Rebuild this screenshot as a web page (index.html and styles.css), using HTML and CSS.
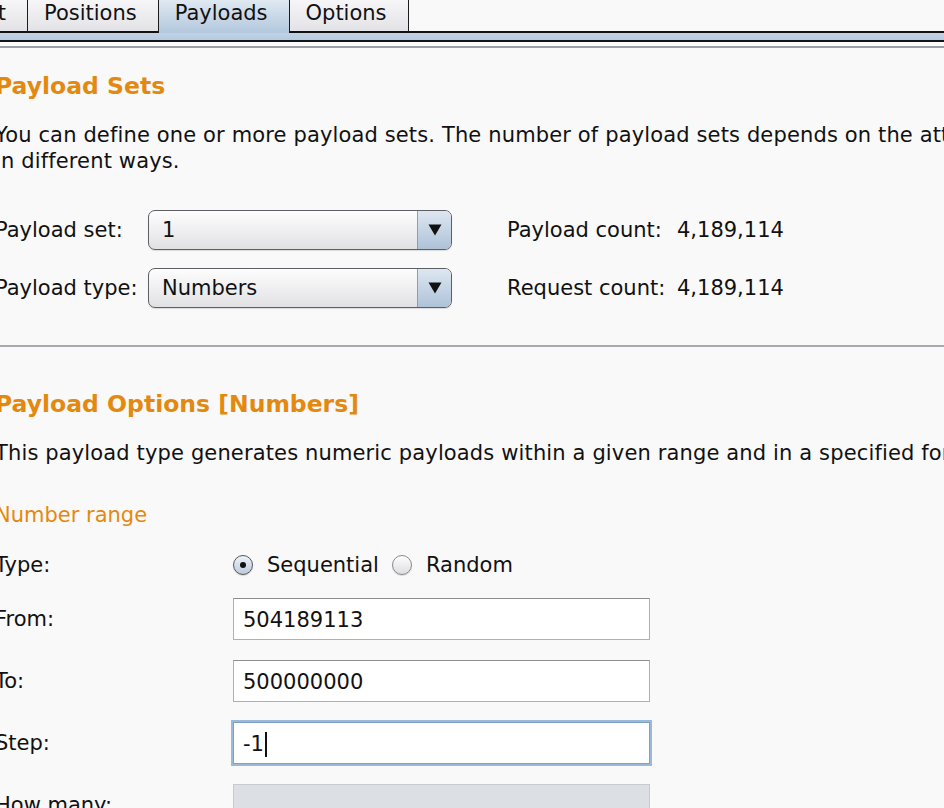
FILE: index.html
```html
<!DOCTYPE html>
<html>
<head>
<meta charset="utf-8">
<title>Intruder Payloads</title>
<link rel="stylesheet" href="styles.css">
</head>
<body>
<div class="tabbar">
  <div class="tabs">
    <div class="tab">Target</div>
    <div class="tab">Positions</div>
    <div class="tab sel">Payloads</div>
    <div class="tab">Options</div>
    <div class="tabfill"></div>
  </div>
  <div class="band"></div>
  <div class="gap"></div>
  <div class="rule"></div>
</div>
<main class="content">
  <h2 class="heading">Payload Sets</h2>
  <p class="desc">You can define one or more payload sets. The number of payload sets depends on the attack type defined in the Positions tab. Various payload types are available for each payload set, and each payload type can be customized<br>in different ways.</p>
  <div class="set-grid">
    <div class="lbl">Payload set:</div>
    <div class="combo"><span class="combo-val">1</span><span class="combo-btn"><svg width="14" height="12" viewBox="0 0 14 12"><polygon points="0.5,0.5 13.5,0.5 7,11.5" fill="#111"/></svg></span></div>
    <div class="count-lbl">Payload count:</div>
    <div class="count-val">4,189,114</div>
    <div class="lbl">Payload type:</div>
    <div class="combo"><span class="combo-val">Numbers</span><span class="combo-btn"><svg width="14" height="12" viewBox="0 0 14 12"><polygon points="0.5,0.5 13.5,0.5 7,11.5" fill="#111"/></svg></span></div>
    <div class="count-lbl">Request count:</div>
    <div class="count-val">4,189,114</div>
  </div>
  <div class="sep"></div>
  <h2 class="heading h2b">Payload Options [Numbers]</h2>
  <p class="desc">This payload type generates numeric payloads within a given range and in a specified format.</p>
  <div class="subhead">Number range</div>
  <div class="range-grid">
    <div class="lbl">Type:</div>
    <div class="radios">
      <span class="radio on"></span><span class="rtext">Sequential</span>
      <span class="radio"></span><span class="rtext">Random</span>
    </div>
    <div class="lbl">From:</div>
    <div class="field">504189113</div>
    <div class="lbl">To:</div>
    <div class="field">500000000</div>
    <div class="lbl">Step:</div>
    <div class="field focus">-1<span class="caret"></span></div>
    <div class="lbl">How many:</div>
    <div class="field disabled"></div>
  </div>
</main>
</body>
</html>
```
FILE: styles.css
```css
html, body {
  margin: 0;
  padding: 0;
}
body {
  width: 944px;
  height: 808px;
  overflow: hidden;
  background: #f9f9f9;
  font-family: "DejaVu Sans", "Liberation Sans", sans-serif;
  font-size: 21px;
  color: #111;
}

/* tab bar */
.tabs {
  display: flex;
  height: 33px;
  margin-left: -76px;
}
.tab {
  box-sizing: border-box;
  height: 33px;
  padding: 0 21px 0 16px;
  line-height: 26px;
  white-space: nowrap;
  border-left: 1px solid #1c1c20;
  border-bottom: 2px solid #111;
  background: linear-gradient(#f6f6f8, #e3e3e7);
}
.tab.sel {
  border-bottom: none;
  background: linear-gradient(#e0e9f2, #c6d6e6 55%, #b3c8de);
}
.tabfill {
  flex: 1;
  border-left: 1px solid #1c1c20;
  border-bottom: 2px solid #111;
}
.band {
  height: 7px;
  background: linear-gradient(#bfd2e6, #b7cbe0);
  border-bottom: 2px solid #121317;
}
.gap {
  height: 4px;
  background: #fbfbfc;
}
.rule {
  height: 2px;
  background: #9c9ea6;
}

/* content */
.content {
  margin-left: -5px;
}
.heading {
  margin: 23px 0 0;
  font-size: 23.5px;
  font-weight: bold;
  line-height: 30px;
  color: #e4890f;
}
.h2b {
  margin-top: 42px;
}
.desc {
  margin: 21px 0 0;
  line-height: 26px;
  letter-spacing: 0.14px;
  white-space: nowrap;
}
.lbl {
  line-height: 26px;
  white-space: nowrap;
}

.set-grid {
  display: grid;
  grid-template-columns: 153px 304px 225px auto;
  grid-auto-rows: 40px;
  row-gap: 18px;
  align-items: center;
  margin-top: 36px;
}
.combo {
  box-sizing: border-box;
  height: 40px;
  display: flex;
  align-items: stretch;
  border: 1px solid #5e5f64;
  border-radius: 7px;
  overflow: hidden;
  background: linear-gradient(#fdfdfd, #eeeef0 55%, #e1e1e5);
  box-shadow: 0 1px 1px rgba(0, 0, 0, 0.12);
}
.combo-val {
  flex: 1;
  padding-left: 13px;
  line-height: 38px;
}
.combo-btn {
  width: 33px;
  display: flex;
  align-items: center;
  justify-content: center;
  border-left: 1px solid #8f9db0;
  background: linear-gradient(#dde7f1, #c3d3e3 55%, #aec2d7);
}
.count-lbl {
  padding-left: 55px;
  line-height: 26px;
  white-space: nowrap;
}
.count-val {
  line-height: 26px;
}

.sep {
  height: 2px;
  margin-top: 37px;
  background: #a7a9b0;
}

.subhead {
  margin-top: 36px;
  line-height: 26px;
  color: #e4890f;
}

.range-grid {
  display: grid;
  grid-template-columns: 238px 417px;
  grid-template-rows: 27px 42px 42px 42px 42px;
  row-gap: 20px;
  align-items: center;
  margin-top: 23px;
}
.radios {
  display: flex;
  align-items: center;
  line-height: 26px;
}
.radio {
  position: relative;
  box-sizing: border-box;
  width: 20px;
  height: 20px;
  border-radius: 50%;
  border: 1px solid #8a8a8f;
  background: linear-gradient(#fdfdfd, #dedee2);
  box-shadow: 0 1px 1px rgba(0, 0, 0, 0.15);
}
.radio.on {
  border-color: #55565c;
  background: linear-gradient(#eef3f8, #bccbdb);
}
.radio.on::after {
  content: "";
  position: absolute;
  left: 6px;
  top: 6px;
  width: 6px;
  height: 6px;
  border-radius: 50%;
  background: #111;
}
.rtext {
  margin-left: 14px;
  margin-right: 13px;
}
.field {
  box-sizing: border-box;
  height: 42px;
  display: flex;
  align-items: center;
  padding: 2px 9px 0;
  background: #fff;
  border: 1px solid #b0b0b4;
  border-top-color: #8e8e92;
  line-height: 26px;
}
.field.focus {
  border-color: #7da2c9;
  box-shadow: 0 0 0 2px #9bbad9;
}
.field.disabled {
  background: #dcdfe4;
  border-color: #c8cacf;
}
.caret {
  display: inline-block;
  width: 2px;
  height: 25px;
  margin-left: 1px;
  background: #111;
}
```
